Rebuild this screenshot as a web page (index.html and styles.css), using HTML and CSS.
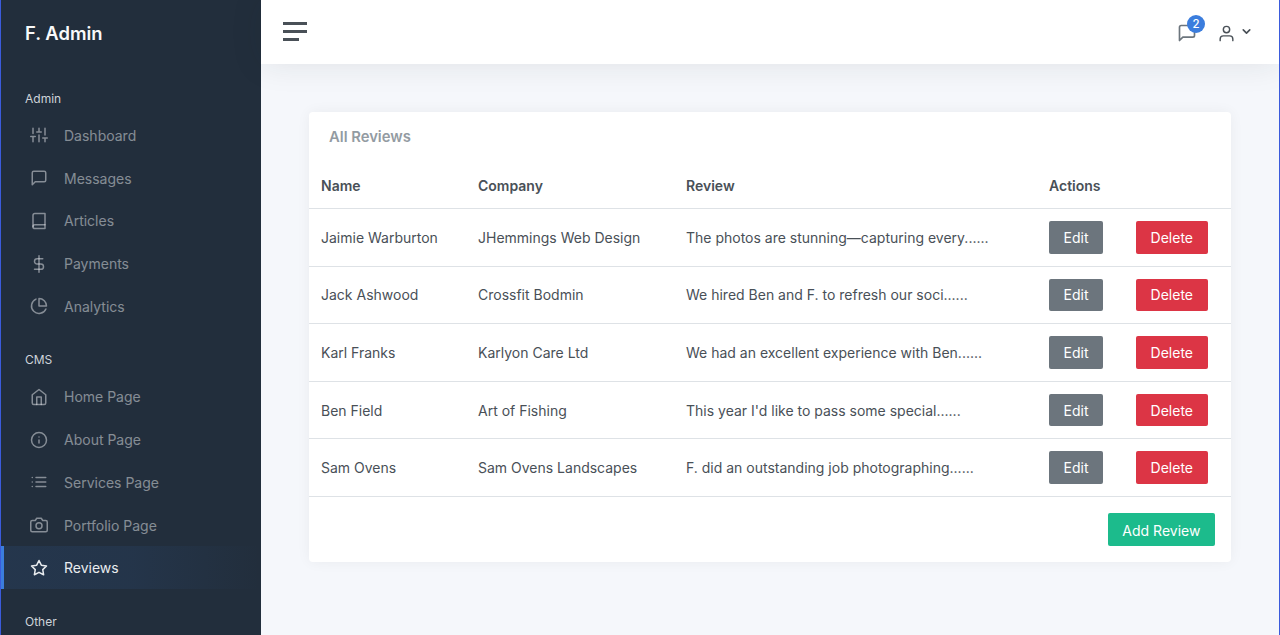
FILE: index.html
```html
<!DOCTYPE html>
<html lang="en">
<head>
  <meta charset="UTF-8" />
  <meta name="viewport" content="width=device-width, initial-scale=1.0" />
  <title>F. Admin - Reviews</title>
  <link rel="stylesheet" href="styles.css">
</head>
<body>
  <div class="wrapper">
    <!-- Sidebar -->
    <nav class="sidebar">
      <a class="brand" href="#">F. Admin</a>
      <div class="nav-heading">Admin</div>
      <a class="nav-link" href="#">
        <svg class="icon" viewBox="0 0 24 24"><path d="M4 21v-7M4 10V3M12 21v-9M12 8V3M20 21v-5M20 12V3M1 14h6M9 8h6M17 16h6"/></svg>
        <span>Dashboard</span>
      </a>
      <a class="nav-link" href="#">
        <svg class="icon" viewBox="0 0 24 24"><path d="M21 15a2 2 0 0 1-2 2H7l-4 4V5a2 2 0 0 1 2-2h14a2 2 0 0 1 2 2z"/></svg>
        <span>Messages</span>
      </a>
      <a class="nav-link" href="#">
        <svg class="icon" viewBox="0 0 24 24"><path d="M4 19.5A2.5 2.5 0 0 1 6.5 17H20"/><path d="M6.5 2H20v20H6.5A2.5 2.5 0 0 1 4 19.5v-15A2.5 2.5 0 0 1 6.5 2z"/></svg>
        <span>Articles</span>
      </a>
      <a class="nav-link" href="#">
        <svg class="icon" viewBox="0 0 24 24"><path d="M12 1v22"/><path d="M17 5H9.5a3.5 3.5 0 0 0 0 7h5a3.5 3.5 0 0 1 0 7H6"/></svg>
        <span>Payments</span>
      </a>
      <a class="nav-link" href="#">
        <svg class="icon" viewBox="0 0 24 24"><path d="M21.21 15.89A10 10 0 1 1 8 2.83"/><path d="M22 12A10 10 0 0 0 12 2v10z"/></svg>
        <span>Analytics</span>
      </a>
      <div class="nav-heading">CMS</div>
      <a class="nav-link" href="#">
        <svg class="icon" viewBox="0 0 24 24"><path d="M3 9l9-7 9 7v11a2 2 0 0 1-2 2H5a2 2 0 0 1-2-2z"/><path d="M9 22V12h6v10"/></svg>
        <span>Home Page</span>
      </a>
      <a class="nav-link" href="#">
        <svg class="icon" viewBox="0 0 24 24"><circle cx="12" cy="12" r="10"/><path d="M12 16v-4M12 8h.01"/></svg>
        <span>About Page</span>
      </a>
      <a class="nav-link" href="#">
        <svg class="icon" viewBox="0 0 24 24"><path d="M8 6h13M8 12h13M8 18h13M3 6h.01M3 12h.01M3 18h.01"/></svg>
        <span>Services Page</span>
      </a>
      <a class="nav-link" href="#">
        <svg class="icon" viewBox="0 0 24 24"><path d="M23 19a2 2 0 0 1-2 2H3a2 2 0 0 1-2-2V8a2 2 0 0 1 2-2h4l2-3h6l2 3h4a2 2 0 0 1 2 2z"/><circle cx="12" cy="13" r="4"/></svg>
        <span>Portfolio Page</span>
      </a>
      <a class="nav-link active" href="#">
        <svg class="icon" viewBox="0 0 24 24"><path d="M12 2l3.09 6.26L22 9.27l-5 4.87 1.18 6.88L12 17.77l-6.18 3.25L7 14.14 2 9.27l6.91-1.01z"/></svg>
        <span>Reviews</span>
      </a>
      <div class="nav-heading">Other</div>
    </nav>

    <div class="main">
      <!-- Top bar -->
      <header class="topbar">
        <button class="menu-toggle" aria-label="Toggle menu"><i></i><i></i><i class="short"></i></button>
        <div class="topbar-right">
          <a class="msg-link" href="#">
            <svg class="icon" viewBox="0 0 24 24"><path d="M21 15a2 2 0 0 1-2 2H7l-4 4V5a2 2 0 0 1 2-2h14a2 2 0 0 1 2 2z"/></svg>
            <span class="badge">2</span>
          </a>
          <a class="user-link" href="#">
            <svg class="icon" viewBox="0 0 24 24"><path d="M20 21v-2a4 4 0 0 0-4-4H8a4 4 0 0 0-4 4v2"/><circle cx="12" cy="7" r="4"/></svg>
            <svg class="caret" viewBox="0 0 24 24"><path d="M6 9l6 6 6-6"/></svg>
          </a>
        </div>
      </header>

      <!-- Reviews table -->
      <main class="content">
        <div class="card">
          <h5 class="card-title">All Reviews</h5>
          <table class="table">
            <colgroup>
              <col class="col-name"><col class="col-company"><col class="col-review"><col class="col-edit"><col class="col-delete">
            </colgroup>
            <thead>
              <tr><th>Name</th><th>Company</th><th>Review</th><th colspan="2">Actions</th></tr>
            </thead>
            <tbody>
              <tr>
                <td>Jaimie Warburton</td><td>JHemmings Web Design</td><td>The photos are stunning—capturing every......</td>
                <td><a class="btn btn-grey" href="#">Edit</a></td><td><a class="btn btn-red" href="#">Delete</a></td>
              </tr>
              <tr>
                <td>Jack Ashwood</td><td>Crossfit Bodmin</td><td>We hired Ben and F. to refresh our soci......</td>
                <td><a class="btn btn-grey" href="#">Edit</a></td><td><a class="btn btn-red" href="#">Delete</a></td>
              </tr>
              <tr>
                <td>Karl Franks</td><td>Karlyon Care Ltd</td><td>We had an excellent experience with Ben......</td>
                <td><a class="btn btn-grey" href="#">Edit</a></td><td><a class="btn btn-red" href="#">Delete</a></td>
              </tr>
              <tr>
                <td>Ben Field</td><td>Art of Fishing</td><td>This year I'd like to pass some special......</td>
                <td><a class="btn btn-grey" href="#">Edit</a></td><td><a class="btn btn-red" href="#">Delete</a></td>
              </tr>
              <tr>
                <td>Sam Ovens</td><td>Sam Ovens Landscapes</td><td>F. did an outstanding job photographing......</td>
                <td><a class="btn btn-grey" href="#">Edit</a></td><td><a class="btn btn-red" href="#">Delete</a></td>
              </tr>
            </tbody>
          </table>
          <div class="card-foot">
            <a class="btn btn-green" href="#">Add Review</a>
          </div>
        </div>
      </main>
    </div>
  </div>
</body>
</html>
```

FILE: styles.css
```css
* {
  box-sizing: border-box;
}
html, body {
  height: 100%;
}
body {
  margin: 0;
  background-color: #f5f7fb;
  color: #495057;
  font-family: Inter, "Liberation Sans", sans-serif;
  font-size: 14px;
  line-height: 1.5;
  overflow: hidden;
  border-left: 1px solid #3b5bdb;
  border-right: 1px solid #3b5bdb;
}
a {
  text-decoration: none;
}
.icon {
  width: 18px;
  height: 18px;
  flex: none;
  fill: none;
  stroke: currentColor;
  stroke-width: 2;
  stroke-linecap: round;
  stroke-linejoin: round;
}
.wrapper {
  display: flex;
  height: 100%;
}

/* Sidebar */
.sidebar {
  width: 260px;
  flex: none;
  height: 100%;
  overflow: hidden;
  background-color: #222e3c;
}
.brand {
  display: block;
  padding: 19px 24px;
  height: 66.25px;
  color: #f8f9fa;
  font-size: 18.4px;
  font-weight: 600;
  line-height: 28px;
}
.nav-heading {
  padding: 23.25px 24px 6.5px;
  color: #ced4da;
  font-size: 12px;
  line-height: 18px;
}
.nav-link {
  display: flex;
  align-items: center;
  gap: 16px;
  height: 42.75px;
  padding-left: 29px;
  color: rgba(233, 236, 239, 0.5);
}
.nav-link.active {
  margin-top: -0.75px;
  margin-bottom: 0.75px;
  padding-top: 1.5px;
  padding-left: 26px;
  color: #e9ecef;
  border-left: 3px solid #3b7ddd;
  background: linear-gradient(90deg, rgba(59, 125, 221, 0.1), rgba(59, 125, 221, 0.0875) 50%, transparent);
}

/* Top bar */
.main {
  flex: 1;
  min-width: 0;
}
.topbar {
  position: relative;
  display: flex;
  align-items: center;
  justify-content: space-between;
  height: 64px;
  padding: 0 26.5px 2px 22px;
  background-color: #fff;
  box-shadow: 0 0 32px rgba(33, 37, 41, 0.1);
}
.menu-toggle {
  display: flex;
  flex-direction: column;
  gap: 5px;
  width: 24px;
  padding: 0;
  border: none;
  background: none;
}
.menu-toggle i {
  display: block;
  width: 24px;
  height: 3px;
  background-color: #495057;
}
.menu-toggle i.short {
  width: 16px;
}
.topbar-right {
  display: flex;
  align-items: center;
  gap: 20.5px;
  margin-top: 4px;
}
.msg-link {
  position: relative;
  display: flex;
  color: #6c757d;
}
.msg-link .icon {
  width: 20px;
  height: 20px;
}
.badge {
  position: absolute;
  top: -8px;
  right: -8.5px;
  width: 18px;
  height: 18px;
  border-radius: 50%;
  background-color: #3b7ddd;
  color: #fff;
  font-size: 11.5px;
  font-weight: 500;
  line-height: 18px;
  text-align: center;
}
.user-link {
  display: flex;
  align-items: center;
  gap: 3.5px;
  color: #495057;
}
.user-link .icon {
  width: 19px;
  height: 19px;
  stroke-width: 1.8;
}
.caret {
  width: 13px;
  height: 13px;
  margin-top: -4px;
  fill: none;
  stroke: currentColor;
  stroke-width: 3;
  stroke-linecap: round;
  stroke-linejoin: round;
}

/* Card and table */
.content {
  padding: 48px 48px 0;
}
.card {
  background-color: #fff;
  border-radius: 4px;
  box-shadow: 0 0 14px rgba(33, 37, 41, 0.05);
}
.card-title {
  margin: 0;
  padding: 14px 20px 0;
  height: 51px;
  color: #939ba2;
  font-size: 14.8px;
  font-weight: 600;
  line-height: 22px;
}
.table {
  width: 100%;
  border-collapse: collapse;
  table-layout: fixed;
}
.col-name { width: 157px; }
.col-company { width: 208px; }
.col-review { width: 363px; }
.col-edit { width: 87px; }
.table th {
  padding: 12px;
  text-align: left;
  font-weight: 600;
  border-bottom: 1px solid #dee2e6;
}
.table td {
  padding: 12px;
  vertical-align: middle;
  border-bottom: 1px solid #dee2e6;
  white-space: nowrap;
}
.btn {
  display: inline-block;
  padding: 5.9px 13.6px 4.1px;
  border: 1px solid transparent;
  border-radius: 2px;
  color: #fff;
  line-height: 20.6px;
  vertical-align: top;
}
.btn-grey { background-color: #6c757d; }
.btn-red { background-color: #dc3545; }
.btn-green {
  background-color: #1cbb8c;
  line-height: 21.2px;
}
.card-foot {
  display: flex;
  justify-content: flex-end;
  padding: 16px;
}
```
